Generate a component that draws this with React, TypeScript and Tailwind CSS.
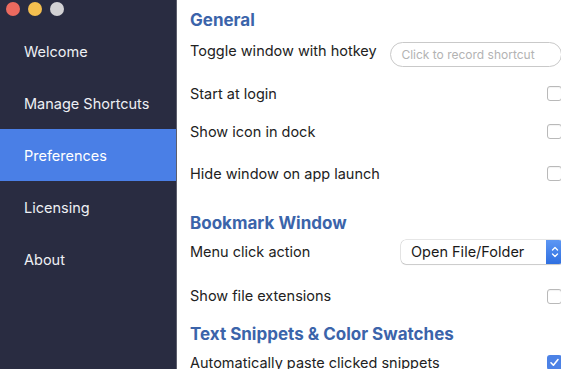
import React from 'react'

const navItems = ['Welcome', 'Manage Shortcuts', 'Preferences', 'Licensing', 'About']

function Checkbox({ checked = false }: { checked?: boolean }) {
  return checked ? (
    <div className="w-[15px] h-[15px] rounded-[3px] bg-[#4c82e6] flex items-center justify-center mr-[-1px]">
      <svg width="11" height="11" viewBox="0 0 11 11" fill="none">
        <path d="M2 5.8 L4.4 8.2 L9 2.6" stroke="white" strokeWidth="1.6" strokeLinecap="round" strokeLinejoin="round" />
      </svg>
    </div>
  ) : (
    <div className="w-[15px] h-[15px] rounded-[3px] border border-[#b9b9b9] bg-white shadow-[inset_0_1px_1px_rgba(0,0,0,0.05)] mr-[-1px]" />
  )
}

function Row({ label, children, className }: { label: string; children?: React.ReactNode; className: string }) {
  return (
    <div className={`flex items-center justify-between h-[24px] ${className}`}>
      <span className="text-[14.5px] text-[#222]">{label}</span>
      {children}
    </div>
  )
}

function Heading({ text, className }: { text: string; className: string }) {
  return (
    <div className={`h-[24px] flex items-center text-[17px] font-bold text-[#3b64aa] ${className}`}>{text}</div>
  )
}

export default function App() {
  return (
    <div className="w-[561px] h-[369px] flex overflow-hidden bg-white" style={{ fontFamily: 'Inter, "Liberation Sans", sans-serif' }}>
      {/* sidebar */}
      <div className="w-[177px] shrink-0 bg-[#292c41] border-r border-[#5c5e6c] flex flex-col">
        <div className="h-[25px] flex items-start pt-[2px] pl-[6px] gap-[8px]">
          <div className="w-[14px] h-[14px] rounded-full bg-[#ec6a5f]" />
          <div className="w-[14px] h-[14px] rounded-full bg-[#f4bf4f]" />
          <div className="w-[14px] h-[14px] rounded-full bg-[#d2d2d4]" />
        </div>
        {navItems.map(item => (
          <div key={item}
            className={`h-[52px] flex items-center pl-[24px] pt-[1px] text-[14.5px] ${item === 'Preferences' ? 'bg-[#4a7fe6] text-white' : 'text-[#eef0f4]'}`}>
            {item}
          </div>
        ))}
      </div>

      {/* preferences */}
      <div className="flex-1 pl-[13px] flex flex-col">
        <Heading text="General" className="mt-[9px]" />
        <div className="flex items-start justify-between h-[28px] mt-[6px]">
          <span className="text-[14.5px] text-[#222] leading-[24px]">Toggle window with hotkey</span>
          <div className="mt-[3px] w-[172px] h-[25px] rounded-full border border-[#c9c9c9] flex items-center justify-center text-[12px] text-[#b3b3b3] mr-[-1px]">
            <span className="mr-[16px]">Click to record shortcut</span>
          </div>
        </div>
        <Row label="Start at login" className="mt-[16px]"><Checkbox /></Row>
        <Row label="Show icon in dock" className="mt-[16px]"><Checkbox /></Row>
        <Row label="Hide window on app launch" className="mt-[20px]"><Checkbox /></Row>
        <Heading text="Bookmark Window" className="mt-[27px]" />
        <div className="flex items-center justify-between h-[24px] mt-[5px]">
          <span className="text-[14.5px] text-[#222]">Menu click action</span>
          <div className="flex h-[24px] mr-[-3px] rounded-[5px] shadow-[0_0_0_0.5px_rgba(0,0,0,0.2),0_1px_1px_rgba(0,0,0,0.12)] bg-white">
            <div className="w-[145px] pl-[10px] flex items-center text-[14.5px] text-[#1a1a1a]">Open File/Folder</div>
            <div className="w-[18px] rounded-r-[5px] bg-gradient-to-b from-[#5d97f4] to-[#2f6fe0] flex items-center justify-center">
              <svg width="8" height="14" viewBox="0 0 8 14" fill="none">
                <path d="M1.5 5 L4 2.5 L6.5 5 M1.5 9 L4 11.5 L6.5 9" stroke="white" strokeWidth="1.3" strokeLinecap="round" strokeLinejoin="round" />
              </svg>
            </div>
          </div>
        </div>
        <Row label="Show file extensions" className="mt-[21px]"><Checkbox /></Row>
        <Heading text="Text Snippets & Color Swatches" className="mt-[16px]" />
        <Row label="Automatically paste clicked snippets" className="mt-[5px]"><Checkbox checked /></Row>
      </div>
    </div>
  )
}
